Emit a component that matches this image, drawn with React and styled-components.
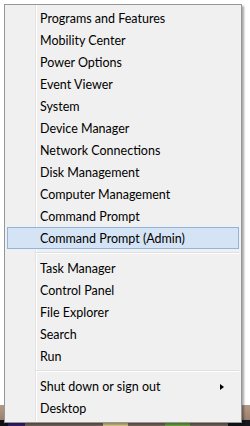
import React from 'react';
import styled, { createGlobalStyle } from 'styled-components';

const GlobalStyle = createGlobalStyle`
  html, body {
    margin: 0;
    padding: 0;
    background: #fff;
  }
  body {
    font-family: Lato, 'Open Sans', 'Liberation Sans', sans-serif;
    overflow: hidden;
  }
`;

const groups = [
  [
    'Programs and Features',
    'Mobility Center',
    'Power Options',
    'Event Viewer',
    'System',
    'Device Manager',
    'Network Connections',
    'Disk Management',
    'Computer Management',
    'Command Prompt',
    'Command Prompt (Admin)',
  ],
  ['Task Manager', 'Control Panel', 'File Explorer', 'Search', 'Run'],
  ['Shut down or sign out', 'Desktop'],
];

const taskbarChips = [
  { width: 8, color: '#141018' },
  { width: 17, color: '#3b1f78' },
  { width: 78, color: '#7a6a5e' },
  { width: 25, color: '#e4d48a' },
  { width: 37, color: '#7d6c5f' },
  { width: 25, color: '#6fae3c' },
  { width: 38, color: '#7a6a5e' },
  { width: 22, color: '#15181c' },
];

export default function App() {
  return (
    <>
      <GlobalStyle />
      <Desktop>
        <Wallpaper />
        <Taskbar>
          <TaskbarTop />
          <TaskbarIcons>
            {taskbarChips.map((c, i) => (
              <Chip key={i} $w={c.width} $color={c.color} />
            ))}
          </TaskbarIcons>
        </Taskbar>

        <Menu>
          {groups.map((group, gi) => (
            <React.Fragment key={gi}>
              {gi > 0 && <Separator />}
              {group.map((label) => (
                <Item key={label} $active={label === 'Command Prompt (Admin)'}>
                  <Label>{label}</Label>
                  {label === 'Shut down or sign out' && <Arrow />}
                </Item>
              ))}
            </React.Fragment>
          ))}
        </Menu>
      </Desktop>
    </>
  );
}

const Desktop = styled.div`
  position: relative;
  width: 250px;
  height: 426px;
  display: flex;
  flex-direction: column;
`;

const Wallpaper = styled.div`
  flex: 1;
  background: #fff;
`;

const Taskbar = styled.div`
  height: 21px;
  display: flex;
  flex-direction: column;
`;

const TaskbarTop = styled.div`
  height: 15px;
  background: linear-gradient(to bottom, #b49a86, #9a806e);
`;

const TaskbarIcons = styled.div`
  flex: 1;
  display: flex;
`;

const Chip = styled.div`
  width: ${(p) => p.$w}px;
  background: ${(p) => p.$color};
`;

const Menu = styled.div`
  position: absolute;
  top: 4px;
  left: 4px;
  width: 236px;
  padding: 2px 0 3px;
  border: 1px solid #979797;
  background:
    linear-gradient(
      to right,
      transparent 30px,
      #e2e3e3 30px,
      #e2e3e3 31px,
      #ffffff 31px,
      #ffffff 32px,
      transparent 32px
    ),
    #f0f0f0;
  box-shadow: 2px 2px 2px rgba(0, 0, 0, 0.35);
  display: flex;
  flex-direction: column;
`;

const Item = styled.div`
  height: 22px;
  margin: 0 2px;
  padding: 1px 14px 0 32px;
  box-sizing: border-box;
  display: flex;
  align-items: center;
  justify-content: space-between;
  border: 1px solid ${(p) => (p.$active ? '#8fb4e0' : 'transparent')};
  background: ${(p) => (p.$active ? '#d5e4f4' : 'transparent')};
`;

const Label = styled.span`
  font-size: 12.5px;
  line-height: 19px;
  color: #000;
  white-space: nowrap;
`;

const Arrow = styled.span`
  width: 0;
  height: 0;
  border-top: 3.5px solid transparent;
  border-bottom: 3.5px solid transparent;
  border-left: 4px solid #000;
`;

const Separator = styled.div`
  height: 8px;
  margin: 0 2px 0 31px;
  display: flex;
  flex-direction: column;
  justify-content: center;

  &::before {
    content: '';
    height: 1px;
    background: #e0e0e0;
  }
  &::after {
    content: '';
    height: 1px;
    background: #fff;
  }
`;
